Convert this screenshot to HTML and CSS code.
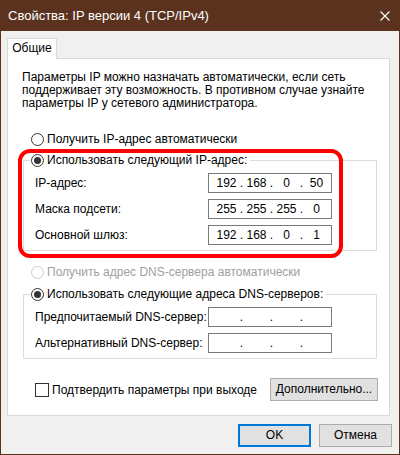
FILE: index.html
```html
<!DOCTYPE html>
<html>
<head>
  <meta charset="utf-8">
  <title>Свойства: IP версии 4 (TCP/IPv4)</title>
  <link rel="stylesheet" href="styles.css">
</head>
<body>
<div class="window">
  <div class="titlebar">
    <span class="caption">Свойства: IP версии 4 (TCP/IPv4)</span>
    <svg class="close" width="10" height="10" viewBox="0 0 10 10">
      <path d="M0.5 0.5 L9.5 9.5 M9.5 0.5 L0.5 9.5" stroke="#fff" stroke-width="1.1" fill="none"/>
    </svg>
  </div>

  <div class="client">
    <div class="tabs">
      <div class="tab">Общие</div>
    </div>
    <div class="panel">
      <p class="intro">Параметры IP можно назначать автоматически, если сеть
        поддерживает эту возможность. В противном случае узнайте
        параметры IP у сетевого администратора.</p>

      <div class="opt first"><span class="radio"></span>Получить IP-адрес автоматически</div>

      <fieldset class="group g-ip">
        <legend class="opt"><span class="radio on"></span>Использовать следующий IP-адрес:</legend>
        <div class="row"><span>IP-адрес:</span>
          <div class="ip"><span class="oct">192</span><span class="dot">.</span><span class="oct">168</span><span class="dot">.</span><span class="oct">0</span><span class="dot">.</span><span class="oct">50</span></div>
        </div>
        <div class="row"><span>Маска подсети:</span>
          <div class="ip"><span class="oct">255</span><span class="dot">.</span><span class="oct">255</span><span class="dot">.</span><span class="oct">255</span><span class="dot">.</span><span class="oct">0</span></div>
        </div>
        <div class="row"><span>Основной шлюз:</span>
          <div class="ip"><span class="oct">192</span><span class="dot">.</span><span class="oct">168</span><span class="dot">.</span><span class="oct">0</span><span class="dot">.</span><span class="oct">1</span></div>
        </div>
      </fieldset>

      <div class="opt dns-auto disabled"><span class="radio"></span>Получить адрес DNS-сервера автоматически</div>

      <fieldset class="group g-dns">
        <legend class="opt"><span class="radio on"></span>Использовать следующие адреса DNS-серверов:</legend>
        <div class="row"><span>Предпочитаемый DNS-сервер:</span>
          <div class="ip"><span class="oct"></span><span class="dot">.</span><span class="oct"></span><span class="dot">.</span><span class="oct"></span><span class="dot">.</span><span class="oct"></span></div>
        </div>
        <div class="row"><span>Альтернативный DNS-сервер:</span>
          <div class="ip"><span class="oct"></span><span class="dot">.</span><span class="oct"></span><span class="dot">.</span><span class="oct"></span><span class="dot">.</span><span class="oct"></span></div>
        </div>
      </fieldset>

      <div class="bottom">
        <div class="opt"><span class="check"></span>Подтвердить параметры при выходе</div>
        <div class="btn wide">Дополнительно...</div>
      </div>
    </div>

    <div class="buttons">
      <div class="btn default">OK</div>
      <div class="btn">Отмена</div>
    </div>
  </div>

  <!-- red marker drawn over the ip group -->
  <div class="marker"></div>
</div>
</body>
</html>
```

FILE: styles.css
```css
html, body {
  margin: 0;
  padding: 0;
}

body {
  font-family: "Liberation Sans", Arial, sans-serif;
  font-size: 12px;
  color: #000;
}

.window {
  position: relative;
  width: 400px;
  height: 455px;
  box-sizing: border-box;
  background-color: #f0f0f0;
  border: 1px solid #5a321e;
  border-top: none;
}

.titlebar {
  height: 31px;
  background-color: #5a321e;
  color: #fff;
  display: flex;
  align-items: center;
  justify-content: space-between;
  padding: 0 10px 0 8px;
  margin: 0 -1px;
  font-size: 13px;
}

.client {
  padding: 7px 9px 0 6px;
}

.tabs {
  display: flex;
}

.tab {
  width: 48px;
  height: 20px;
  line-height: 19px;
  text-align: center;
  background-color: #fff;
  border: 1px solid #d9d9d9;
  border-bottom: none;
  margin-bottom: -1px;
  position: relative;
  z-index: 1;
}

.panel {
  height: 356px;
  background-color: #fff;
  border: 1px solid #d9d9d9;
  padding: 0 11px 0 14px;
}

.intro {
  margin: 12px 0 0;
  line-height: 13px;
}

.opt {
  display: flex;
  align-items: center;
  height: 14px;
  line-height: 14px;
  white-space: nowrap;
}

.opt.first {
  margin: 22px 0 0 9px;
}

.opt.disabled {
  color: #a0a0a0;
}

.dns-auto {
  margin: 14px 0 0 9px;
}

.radio {
  width: 11px;
  height: 11px;
  border: 1px solid #333;
  border-radius: 50%;
  background-color: #fff;
  margin-right: 3px;
  position: relative;
  flex: none;
}

.radio.on::after {
  content: "";
  position: absolute;
  left: 2px;
  top: 2px;
  width: 7px;
  height: 7px;
  border-radius: 50%;
  background-color: #333;
}

.disabled .radio {
  border-color: #ccc;
}

.check {
  width: 12px;
  height: 12px;
  border: 1px solid #333;
  background-color: #fff;
  margin-right: 3px;
  flex: none;
}

.group {
  margin: 7px 0 0 1px;
  width: 354px;
  box-sizing: border-box;
  border: 1px solid #dcdcdc;
  padding: 6px 10px 5px 11px;
  display: flex;
  flex-direction: column;
  gap: 6px;
}

.group legend {
  padding: 0 3px 0 0;
  margin-left: -4px;
}

.g-dns {
  margin-top: 8px;
}

.row {
  display: flex;
  justify-content: space-between;
  align-items: center;
}

.ip {
  width: 124px;
  height: 20px;
  box-sizing: border-box;
  border: 1px solid #7a7a7a;
  display: flex;
  align-items: center;
  padding-left: 5px;
  margin-right: 34px;
}

.oct {
  width: 25px;
  text-align: center;
}

.dot {
  width: 5px;
  text-align: center;
}

.bottom {
  display: flex;
  justify-content: space-between;
  align-items: center;
  margin-top: 19px;
  padding-left: 13px;
}

.btn {
  height: 21px;
  line-height: 21px;
  text-align: center;
  background-color: #e1e1e1;
  border: 1px solid #adadad;
}

.btn.wide {
  width: 106px;
}

.buttons {
  display: flex;
  justify-content: flex-end;
  gap: 8px;
  margin-top: 8px;
  margin-right: -2px;
}

.buttons .btn {
  width: 71px;
}

.btn.default {
  border: 2px solid #0078d7;
  height: 19px;
  line-height: 19px;
  width: 69px;
}

.marker {
  position: absolute;
  left: 17px;
  top: 149px;
  width: 317px;
  height: 101px;
  border: 4px solid #ff0000;
  border-radius: 12px;
}
```
